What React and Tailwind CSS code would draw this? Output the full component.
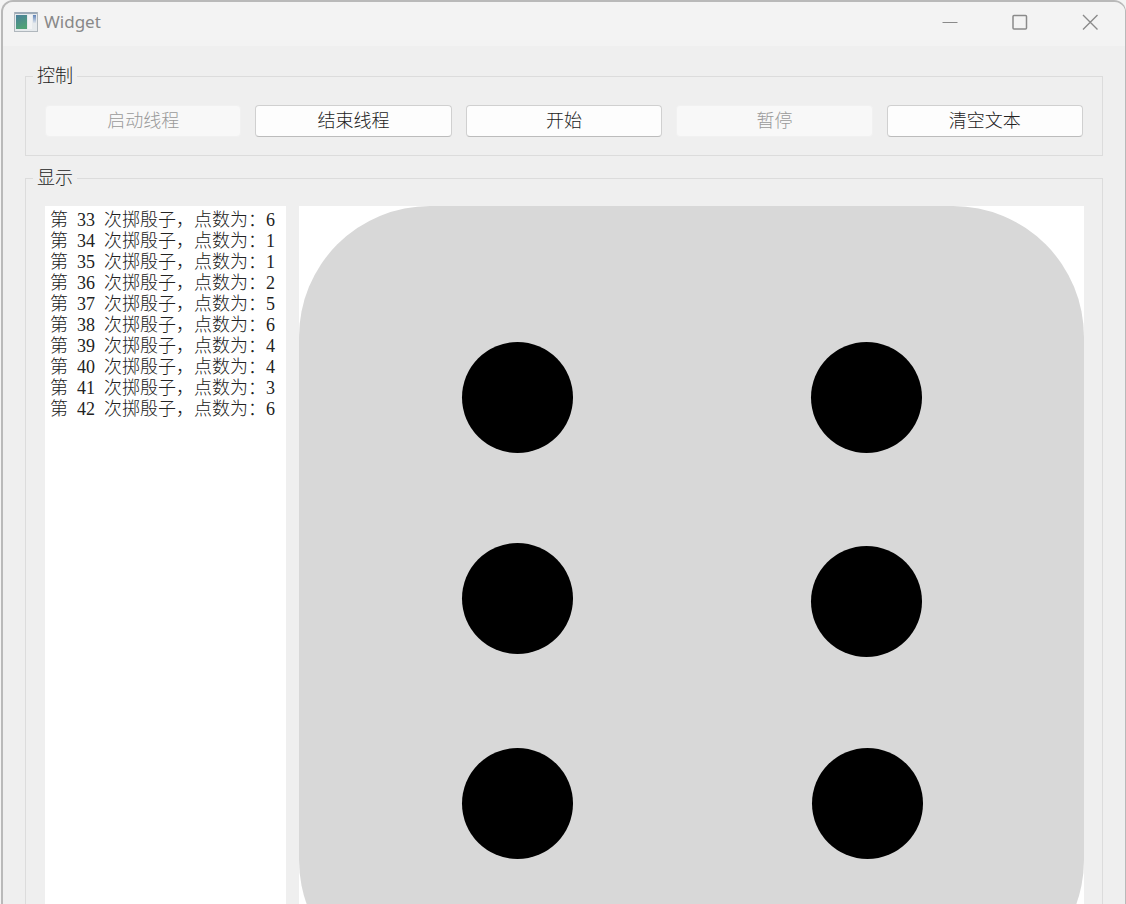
import { useState } from 'react'

const FIRST_LOG = [
  [33, 6],
  [34, 1],
  [35, 1],
  [36, 2],
  [37, 5],
  [38, 6],
  [39, 4],
  [40, 4],
  [41, 3],
  [42, 6],
]

const PIPS = [
  [218.5, 191.5],
  [567.5, 191.5],
  [218.5, 392.5],
  [567.5, 395.5],
  [218.5, 597.5],
  [568.5, 597.5],
]

// half-em spaces keep the counter columns aligned with the full-width text
const formatLine = ([n, points]) => `第\u2002${n}\u2002次掷殷子，点数为：${points}`

export default function App() {
  const [text, setText] = useState(FIRST_LOG.map(formatLine).join('\n'))

  return (
    <div className="h-screen overflow-hidden bg-[#f4f4f4] pl-px">
      <div className="h-full overflow-hidden rounded-t-xl border-t-2 border-l-2 border-r border-[#b9b9b9] bg-[#efefef] font-['Liberation_Serif','Noto_Sans_CJK_SC',serif] text-lg font-light text-[#222222]">
        <TitleBar />
        <main className="px-[22px] pt-5">
          <Group title="控制">
            <div className="grid grid-cols-5 gap-3.5 px-[19px] py-[18px]">
              <PushButton disabled>启动线程</PushButton>
              <PushButton>结束线程</PushButton>
              <PushButton>开始</PushButton>
              <PushButton disabled>暂停</PushButton>
              <PushButton onClick={() => setText('')}>清空文本</PushButton>
            </div>
          </Group>

          <Group title="显示" className="mt-3">
            <div className="flex items-stretch gap-[13px] pt-[17px] pr-[18px] pb-[18px] pl-[19px]">
              <textarea
                aria-label="显示"
                value={text}
                onChange={(e) => setText(e.target.value)}
                className="w-[241px] shrink-0 resize-none overflow-hidden bg-white pt-1 pl-[5px] leading-[21px] outline-none"
              />
              <Die />
            </div>
          </Group>
        </main>
      </div>
    </div>
  )
}

function TitleBar() {
  return (
    <header className="flex h-11 items-center justify-between bg-[#f3f3f3] pb-1 pl-[11px]">
      <div className="flex items-center gap-1.5">
        <AppIcon />
        <h1 className="font-['Noto_Sans',sans-serif] text-[17px] font-normal text-[#888888]">Widget</h1>
      </div>
      <div className="flex text-[#8a8a8a]">
        <button aria-label="Minimize" className="flex h-8 w-[70px] items-center justify-center">
          <svg width="16" height="16" viewBox="0 0 16 16" fill="none" stroke="currentColor">
            <path d="M0.5 8.5H15.5" />
          </svg>
        </button>
        <button aria-label="Maximize" className="flex h-8 w-[70px] items-center justify-center">
          <svg width="16" height="16" viewBox="0 0 16 16" fill="none" stroke="currentColor" strokeWidth="1.5">
            <rect x="1" y="1.5" width="13.5" height="13.5" rx="1" />
          </svg>
        </button>
        <button aria-label="Close" className="flex h-8 w-[70px] items-center justify-center">
          <svg width="16" height="16" viewBox="0 0 16 16" fill="none" stroke="currentColor" strokeWidth="1.4">
            <path d="M1 1L15.5 15.5M15.5 1L1 15.5" />
          </svg>
        </button>
      </div>
    </header>
  )
}

function AppIcon() {
  return (
    <svg width="24" height="20" viewBox="0 0 24 20">
      <defs>
        <linearGradient id="pane" x1="0" y1="0" x2="0.4" y2="1">
          <stop offset="0" stopColor="#4a7f9c" />
          <stop offset="1" stopColor="#4fa276" />
        </linearGradient>
        <linearGradient id="strip" x1="0" y1="0" x2="0" y2="1">
          <stop offset="0" stopColor="#5f83b8" />
          <stop offset="1" stopColor="#dce3ec" />
        </linearGradient>
      </defs>
      <rect x="0.5" y="0.5" width="23" height="19" fill="#e6eaed" stroke="#b0b7bd" />
      <rect x="1" y="0" width="22" height="2" fill="#9eabb8" />
      <rect x="2" y="3" width="11" height="14" fill="url(#pane)" />
      <rect x="14" y="3" width="4" height="14" fill="#f1f3f5" />
      <rect x="19" y="3" width="3" height="8" fill="url(#strip)" />
    </svg>
  )
}

function Group({ title, className = '', children }) {
  return (
    <fieldset className={`border border-[#dcdcdc] ${className}`}>
      <legend className="ml-[7px] h-[21px] px-1 leading-[21px]">{title}</legend>
      {children}
    </fieldset>
  )
}

function PushButton({ children, ...props }) {
  return (
    <button
      className="h-8 rounded border border-[#d0d0d0] border-b-[#bcbcbc] bg-[#fdfdfd] leading-[21px] disabled:border-[#f1f1f1] disabled:bg-[#f8f8f8] disabled:text-[#9a9a9a]"
      {...props}
    >
      {children}
    </button>
  )
}

function Die() {
  return (
    <div className="min-w-0 flex-1 bg-white">
      <svg viewBox="0 0 785 785" className="block w-full">
        <rect width="785" height="785" rx="131" fill="#d8d8d8" />
        {PIPS.map(([cx, cy]) => (
          <circle key={`${cx}-${cy}`} cx={cx} cy={cy} r="55.5" fill="#000" />
        ))}
      </svg>
    </div>
  )
}
